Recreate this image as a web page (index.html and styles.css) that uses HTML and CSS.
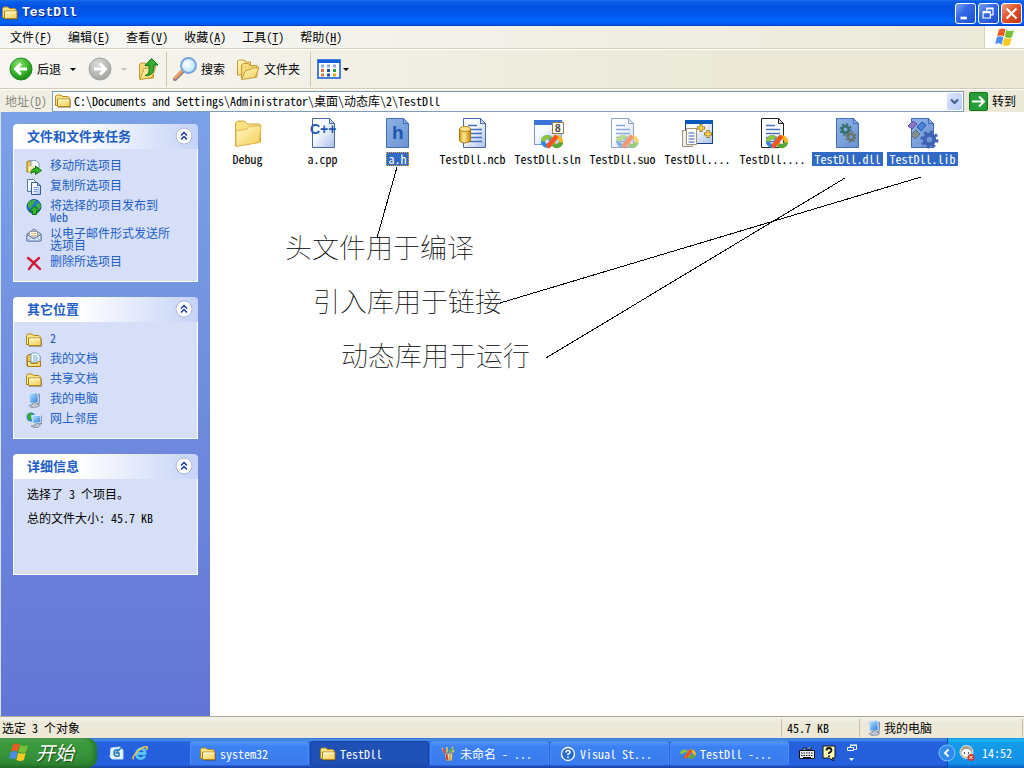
FILE: index.html
```html
<!DOCTYPE html>
<html lang="zh-CN">
<head>
<meta charset="utf-8">
<title>TestDll</title>
<link rel="stylesheet" href="styles.css">
</head>
<body>
<svg class="defs" aria-hidden="true">
  <defs>
    <linearGradient id="gFold" x1="0" y1="0" x2="1" y2="1"><stop offset="0" stop-color="#fffbc4"/><stop offset="1" stop-color="#f5cb55"/></linearGradient>
    <linearGradient id="gPage" x1="0" y1="0" x2="1" y2="1"><stop offset="0" stop-color="#fff"/><stop offset=".4" stop-color="#f6f9ff"/><stop offset="1" stop-color="#a9bfea"/></linearGradient>
    <linearGradient id="gSel" x1="0" y1="0" x2="1" y2="1"><stop offset="0" stop-color="#8fb3e6"/><stop offset="1" stop-color="#6a92d4"/></linearGradient>
    <linearGradient id="gCyl" x1="0" y1="0" x2="1" y2="0"><stop offset="0" stop-color="#d89c1c"/><stop offset=".4" stop-color="#ffe98e"/><stop offset="1" stop-color="#c98509"/></linearGradient>
    <radialGradient id="gGreen" cx=".4" cy=".3" r=".8"><stop offset="0" stop-color="#8ee36e"/><stop offset=".5" stop-color="#3cb82d"/><stop offset="1" stop-color="#0f7c10"/></radialGradient>
    <radialGradient id="gGray" cx=".4" cy=".3" r=".8"><stop offset="0" stop-color="#dcdcda"/><stop offset="1" stop-color="#9b9b99"/></radialGradient>
    <radialGradient id="gLens" cx=".4" cy=".4" r=".7"><stop offset="0" stop-color="#fff"/><stop offset="1" stop-color="#a5dcfb"/></radialGradient>
    <linearGradient id="gMon" x1="0" y1="0" x2="1" y2="1"><stop offset="0" stop-color="#c5edff"/><stop offset="1" stop-color="#1c78e0"/></linearGradient>
  </defs>
  <symbol id="folder" viewBox="0 0 16 16">
    <path d="M.5 12.500V3.500l1-1.500h4.500L7.500 3.500h5.500l1 1v8z" fill="#fbe388" stroke="#b5851c"/>
    <path d="M2.500 13.500v-7.500h12.500v7.500z" fill="url(#gFold)" stroke="#b5851c"/>
    <path d="M3.500 7h10.500" stroke="#fffbd8"/>
    <path d="M3 14.500h12.500V7" stroke="#554419" opacity=".4" fill="none"/>
  </symbol>
  <symbol id="docfolder" viewBox="0 0 16 16">
    <path d="M1 14V4l1.500-1.500H7L8 4h6v10z" fill="#f0c24d" stroke="#9b6d0b"/>
    <path d="M5 10V2l1-1h5l3 3v6H5z" fill="#fff" stroke="#6fa4d8"/><path d="M7 4h4M7 6h5M7 8h5" stroke="#61a4e0"/>
    <path d="M1.500 14.500v-5H4l1 2h6l1-2h2.500v5z" fill="url(#gFold)" stroke="#ad7b12"/>
  </symbol>
  <symbol id="move" viewBox="0 0 16 16">
    <path d="M1 13V3l1.500-1H6l1 1.500h5V13z" fill="#f3c757" stroke="#9b6d0b"/><path d="M5 7V1.500h5l3 3V9H5z" fill="#fff" stroke="#789ac4"/>
    <path d="M2.500 13.500v-6H10v6z" fill="url(#gFold)"/>
    <path d="M5 14.500c0-3 1-5 4.500-5V7l6 4.500-6 4v-2.700c-2 0-3 .4-4.500 1.700z" fill="#32b42b" stroke="#08750b"/>
  </symbol>
  <symbol id="copy" viewBox="0 0 16 16">
    <path d="M1.500 .5h6l3 3v9h-9z" fill="url(#gPage)" stroke="#5679a9"/>
    <path d="M5.500 3.500h6l3 3v9h-9z" fill="url(#gPage)" stroke="#385e96"/><path d="M11.500 3.500v3h3" fill="#a8c4ed" stroke="#385e96"/>
    <path d="M7.500 8.500h5M7.500 10.500h5M7.500 12.500h4" stroke="#79a1da"/>
  </symbol>
  <symbol id="publish" viewBox="0 0 16 16">
    <circle cx="8" cy="7.500" r="7" fill="#2577cf" stroke="#174f96"/><path d="M2 4c2-3 5-3 8-3L8 4 6 6 5 9 2 8zm8 1 4-1 1 4-3 3z" fill="#3eb33c"/>
    <path d="M8.500 7l5 5h-3v3.500h-4V12h-3z" fill="#32b42b" stroke="#077111"/>
  </symbol>
  <symbol id="mail" viewBox="0 0 16 16">
    <path d="M1 7l7-5 7 5v7H1z" fill="#b5cbee" stroke="#6179a7"/><path d="M3.500 4.500h8V10h-8z" fill="#fffef2" stroke="#9b9c9b"/><path d="M5 6.500h5M5 8.500h5" stroke="#e0b868"/>
    <path d="M1 7.500l7 4.500 7-4.500V14H1z" fill="#dfebff" stroke="#6179a7"/><path d="M1 14l5-4M15 14l-5-4" stroke="#869ec7"/>
  </symbol>
  <symbol id="delete" viewBox="0 0 16 16"><path d="M2 3c4 3 8 7 12 11M13 3C9 6 6 9 3 14" stroke="#d31635" stroke-width="2.400" fill="none" stroke-linecap="round"/></symbol>
  <symbol id="pc" viewBox="0 0 16 16">
    <path d="M10 1l4 1v9l-3 2z" fill="#8895ad"/><path d="M2.500 1.500l9-1 1 9.500-8.500 1.500z" fill="url(#gMon)" stroke="#dbe6f5"/>
    <path d="M6 11.500l4-1 1 1.500 3 1-2 2-7 .5L3 13.500l3-.5z" fill="#c1c8d4" stroke="#747e95" stroke-width=".7"/>
  </symbol>
  <symbol id="network" viewBox="0 0 16 16">
    <circle cx="5" cy="5" r="4.500" fill="#2681d5"/><path d="M1 4c1-4 5-3 6-3L5 4l1 3-3 2z" fill="#35ac35"/>
    <path d="M14 3l2 1v8l-3 1z" fill="#77859f"/><path d="M5.500 3.500h9l.5 7-8 1z" fill="url(#gMon)" stroke="#dbe6f5"/><path d="M9 12l4-.5 1 2-2 2H8l-3-1.500 4-.5z" fill="#c1c8d4" stroke="#747e95" stroke-width=".7"/>
  </symbol>
  <symbol id="flag" viewBox="0 0 20 20">
    <path d="M4 2.500q3-2 6.500 0L8.700 9.500q-3.200-2-6.700 0z" fill="#ee5a24"/><path d="M11.300 3q3.200 2 7.700 0L17 10q-3.500 2-7.500-.3z" fill="#76c035"/>
    <path d="M1.800 10.300q3.200-2 6.600 0L6.600 17.500Q4 15.500 .2 17z" fill="#4a8df0"/><path d="M9.200 10.800q4 2 7.600 0l-2 7.200q-4 2-7.500-.3z" fill="#fcca20"/>
  </symbol>
  <symbol id="vs" viewBox="0 0 24 16">
    <circle cx="7" cy="8" r="4.700" fill="none" stroke="#2f86dc" stroke-width="4.400"/>
    <path d="M2.300 8A4.700 4.700 0 0 1 10 4.500" fill="none" stroke="#8cc63e" stroke-width="4.400"/>
    <circle cx="17" cy="8" r="4.700" fill="none" stroke="#f6b81c" stroke-width="4.400"/>
    <path d="M21.700 9A4.700 4.700 0 0 1 13.500 11.200" fill="none" stroke="#57a83a" stroke-width="4.400"/>
    <path d="M7 14Q12 9 17 2" fill="none" stroke="#ee5520" stroke-width="5"/>
  </symbol>
  <symbol id="page" viewBox="0 0 32 32"><path d="M4.500 1.500h17l5 5v24h-22z" fill="url(#gPage)" stroke="#4a68a5"/><path d="M21.500 1.500v5h5z" fill="#c7d9f6" stroke="#4a68a5"/></symbol>
  <symbol id="pagesel" viewBox="0 0 32 32"><path d="M4.500 1.500h17l5 5v24h-22z" fill="url(#gSel)" stroke="#406cb8"/><path d="M21.500 1.500v5h5z" fill="#82a8e5" stroke="#406cb8"/></symbol>
  <symbol id="lines" viewBox="0 0 32 32"><path d="M9 8.500h9M9 12.500h14M9 16.500h14M9 20.500h14M9 24.500h14" stroke="#4472bd" stroke-width="1.500"/></symbol>
  <symbol id="gear" viewBox="0 0 20 20"><circle cx="10" cy="10" r="5" fill="none" stroke="currentColor" stroke-width="4"/><circle cx="10" cy="10" r="8" fill="none" stroke="currentColor" stroke-width="3" stroke-dasharray="3.140 3.140"/></symbol>
  <symbol id="chev" viewBox="0 0 18 18"><circle cx="9" cy="9" r="8" fill="#fff" stroke="#a9b7dc"/><path d="M6 8.500l3-3 3 3M6 12.500l3-3 3 3" fill="none" stroke="#123a96" stroke-width="1.500"/></symbol>
</svg>

<header class="titlebar">
  <svg class="i16"><use href="#folder"/></svg>
  <h1>TestDll</h1>
  <div class="winbtns">
    <button class="wb" aria-label="最小化"><svg viewBox="0 0 21 21"><path d="M5 14h7v3H5z" fill="#fff"/></svg></button>
    <button class="wb" aria-label="还原"><svg viewBox="0 0 21 21"><path d="M8.500 8V4.500h7V12H13M8 5.500h8M4.500 8.500h8v7h-8zM4 9.500h9" fill="none" stroke="#fff" stroke-width="1.300"/></svg></button>
    <button class="wb close" aria-label="关闭"><svg viewBox="0 0 21 21"><path d="M5 5l11 11M16 5L5 16" stroke="#fff" stroke-width="2.400"/></svg></button>
  </div>
</header>

<nav class="menubar">
  <button>文件(<u>F</u>)</button><button>编辑(<u>E</u>)</button><button>查看(<u>V</u>)</button><button>收藏(<u>A</u>)</button><button>工具(<u>T</u>)</button><button>帮助(<u>H</u>)</button>
  <span class="brand"><svg class="i20"><use href="#flag"/></svg></span>
</nav>

<div class="toolbar">
  <button class="tb"><svg class="i24" viewBox="0 0 24 24"><circle cx="12" cy="12" r="11" fill="url(#gGreen)" stroke="#25872a"/><path d="M18 12H7M12 6.500 6.500 12l5.500 5.500" fill="none" stroke="#fff" stroke-width="3"/></svg>后退</button>
  <button class="drop" aria-label="后退列表"></button>
  <button class="tb fwd" aria-label="前进" disabled><svg class="i24" viewBox="0 0 24 24"><circle cx="12" cy="12" r="11" fill="url(#gGray)" stroke="#a5a5a2"/><path d="M6 12h11M12 6.500l5.500 5.500-5.500 5.500" fill="none" stroke="#fff" stroke-width="3"/></svg></button>
  <button class="drop off" aria-label="前进列表" disabled></button>
  <button class="tb up" aria-label="向上"><svg class="i24" viewBox="0 0 24 24"><path d="M3.500 22V7l2-1h4l1 2h7v13z" fill="#f5d878" stroke="#c59a35"/><path d="M4 22.500l4-11 12-2-4 11z" fill="url(#gFold)" stroke="#c59a35"/><path d="M9 18.500c5-1 4-6 4-10H9l6.500-7L22 8h-4c0 7-2 11-9 10.500z" fill="#37ad35" stroke="#0d7416"/></svg></button>
  <span class="sep"></span>
  <button class="tb"><svg class="i24" viewBox="0 0 24 24"><path d="M2 22l8-8" stroke="#8c7b8d" stroke-width="4" stroke-linecap="round"/><path d="M2 21l7-7" stroke="#ef9e5c" stroke-width="2.500" stroke-linecap="round"/><circle cx="15.500" cy="8.500" r="7.500" fill="url(#gLens)" stroke="#7ba4dc" stroke-width="2"/></svg>搜索</button>
  <button class="tb folders"><svg class="i24" viewBox="0 0 24 24"><path d="M1.500 18V4l2-1h5l1 2h5v13z" fill="url(#gFold)" stroke="#c59a35"/><path d="M5.500 21V8l2-1.500h5l1.500 2h7V20z" fill="#f5d878" stroke="#c59a35"/><path d="M5.500 22.500l4-9 5-1 1-1.500 7.500-.5-4 10z" fill="url(#gFold)" stroke="#c59a35"/></svg>文件夹</button>
  <span class="sep"></span>
  <button class="tb" aria-label="查看"><svg class="i24" viewBox="0 0 24 24"><rect x="1" y="3" width="22" height="18" fill="#fff" stroke="#0b58d5" stroke-width="1.500"/><path d="M1 3h22v3H1z" fill="#1260df"/><path d="M4 9h3M10 9h3M16 9h3" stroke="#8faad6" stroke-width="3"/><path d="M4 13.500h3M4 18h3" stroke="#e96f42" stroke-width="3"/><path d="M10 13.500h3M10 18h3" stroke="#184ab0" stroke-width="3"/><path d="M16 13.500h3" stroke="#26a338" stroke-width="3"/><path d="M16 18h3" stroke="#d9ab25" stroke-width="3"/></svg></button>
  <button class="drop tight" aria-label="查看列表"></button>
</div>

<div class="addressbar">
  <label for="addr">地址(<u>D</u>)</label>
  <div class="combo"><svg class="i16"><use href="#folder"/></svg><input id="addr" type="text" value="C:\Documents and Settings\Administrator\桌面\动态库\2\TestDll"><button aria-label="展开"><svg viewBox="0 0 15 17"><path d="M4 6.500l3.500 3.500L11 6.500" fill="none" stroke="#42608f" stroke-width="2.200"/></svg></button></div>
  <button class="go"><svg viewBox="0 0 19 19"><rect x=".5" y=".5" width="18" height="18" rx="1" fill="#259c35" stroke="#157622"/><path d="M3 9.500h12M10 4.500l5 5-5 5" fill="none" stroke="#fff" stroke-width="2"/></svg>转到</button>
</div>

<main class="content">
  <aside class="side">
    <section class="box">
      <h2>文件和文件夹任务<button aria-label="折叠"><svg><use href="#chev"/></svg></button></h2>
      <ul>
        <li><svg class="i16"><use href="#move"/></svg><a href="#">移动所选项目</a></li>
        <li><svg class="i16"><use href="#copy"/></svg><a href="#">复制所选项目</a></li>
        <li><svg class="i16"><use href="#publish"/></svg><a href="#">将选择的项目发布到 Web</a></li>
        <li><svg class="i16"><use href="#mail"/></svg><a href="#">以电子邮件形式发送所选项目</a></li>
        <li><svg class="i16"><use href="#delete"/></svg><a href="#">删除所选项目</a></li>
      </ul>
    </section>
    <section class="box">
      <h2>其它位置<button aria-label="折叠"><svg><use href="#chev"/></svg></button></h2>
      <ul>
        <li><svg class="i16"><use href="#folder"/></svg><a href="#">2</a></li>
        <li><svg class="i16"><use href="#docfolder"/></svg><a href="#">我的文档</a></li>
        <li><svg class="i16"><use href="#folder"/></svg><a href="#">共享文档</a></li>
        <li><svg class="i16"><use href="#pc"/></svg><a href="#">我的电脑</a></li>
        <li><svg class="i16"><use href="#network"/></svg><a href="#">网上邻居</a></li>
      </ul>
    </section>
    <section class="box">
      <h2>详细信息<button aria-label="折叠"><svg><use href="#chev"/></svg></button></h2>
      <div class="details"><p>选择了 3 个项目。</p><p>总的文件大小: 45.7 KB</p></div>
    </section>
  </aside>

  <section class="pane">
    <ul class="files">
      <li><svg viewBox="0 0 32 32"><path d="M3.500 29V6l2-2h7l3 3h12l1 2v16z" fill="#fbe182" stroke="#cfa43a"/><path d="M4 29.500V14l11-2 2-2.500 12-1-1.500 17z" fill="url(#gFold)" stroke="#dfb44c"/></svg><span>Debug</span></li>
      <li><svg viewBox="0 0 32 32"><use href="#page" x="1"/><text x="3" y="17" class="ic cpp">C++</text></svg><span>a.cpp</span></li>
      <li class="sel focus"><svg viewBox="0 0 32 32"><use href="#pagesel"/><text x="10" y="22" class="ic h">h</text></svg><span>a.h</span></li>
      <li><svg viewBox="0 0 32 32"><use href="#page" x="2"/><use href="#lines" x="2"/><path d="M2.500 12v12q5 4 11 0V12z" fill="url(#gCyl)" stroke="#ac7810"/><ellipse cx="8" cy="12" rx="5.500" ry="2.500" fill="#ffe58b" stroke="#bb8717"/></svg><span>TestDll.ncb</span></li>
      <li><svg viewBox="0 0 32 32"><rect x="2.500" y="3.500" width="27" height="24" fill="url(#gPage)" stroke="#7b99d1"/><path d="M2 3h28v5H2z" fill="#3975d5"/><use href="#vs" x="8" y="17" width="24" height="15"/><rect x="20.500" y="5.500" width="11" height="11" fill="#fffdf0" stroke="#987c58"/><text x="23" y="15" class="ic n8">8</text></svg><span>TestDll.sln</span></li>
      <li><svg viewBox="0 0 32 32" class="faded"><use href="#page"/><use href="#lines"/><use href="#vs" x="9" y="17" width="23" height="15"/></svg><span>TestDll.suo</span></li>
      <li><svg viewBox="0 0 32 32"><rect x="3.500" y="3.500" width="27" height="23" fill="url(#gPage)" stroke="#173e84"/><path d="M3 3h28v4H3z" fill="#0759ba"/><path d="M.500 13.500h10v16H.5z" fill="#eee" stroke="#9d9477"/><path d="M4.500 11.500h10v16h-10z" fill="#fff" stroke="#9d9477"/><path d="M6.500 16h6M6.500 19h6M6.500 22h6M6.500 25h6" stroke="#315da5"/><path d="M19 7v8M15 11h8M26 13v8M22 17h8" stroke="#a2761c" stroke-width="3"/><path d="M19 8v6M16 11h6M26 14v6M23 17h6" stroke="#ffe04e" stroke-width="1.500"/></svg><span>TestDll....</span></li>
      <li><svg viewBox="0 0 32 32"><path d="M4.500 1.500h17l5 5v24h-22z" fill="#fff" stroke="#222"/><path d="M21.500 1.500v5h5z" fill="#ccd6e8" stroke="#222"/><use href="#lines"/><use href="#vs" x="8" y="17" width="24" height="15"/></svg><span>TestDll....</span></li>
      <li class="sel"><svg viewBox="0 0 32 32"><use href="#pagesel"/><use href="#gear" x="7" y="6" width="13" height="13" class="g1"/><use href="#gear" x="13" y="14" width="12" height="12" class="g2"/></svg><span>TestDll.dll</span></li>
      <li class="sel"><svg viewBox="0 0 32 32"><use href="#pagesel"/><path d="M1 9l5-5 4 3-5 5z" fill="#8d73c7" stroke="#5b52a1"/><path d="M10 10l5-5 4 3-5 6z" fill="#4c84da" stroke="#2455a3"/><path d="M4 18l5-5 4 4-5 5z" fill="#848d87" stroke="#586b87"/><use href="#gear" x="13" y="13" width="19" height="19" class="g3"/></svg><span>TestDll.lib</span></li>
    </ul>
    <div class="notes">
      <svg viewBox="0 0 814 260" width="814" height="260"><path d="M187 55 167 126M711 65 290 191M635 66 336 246" stroke="#000" fill="none" shape-rendering="crispEdges"/></svg>
      <p class="n-head">头文件用于编译</p><p class="n-lib">引入库用于链接</p><p class="n-dll">动态库用于运行</p>
    </div>
  </section>
</main>

<footer class="status">
  <span class="grow">选定 3 个对象</span><span class="size">45.7 KB</span><span class="loc"><svg class="i16"><use href="#pc"/></svg>我的电脑</span>
</footer>

<div class="taskbar">
  <button class="start"><svg class="i20"><use href="#flag"/></svg>开始</button>
  <div class="quick">
    <button aria-label="显示桌面"><svg class="i16" viewBox="0 0 16 16"><path d="M2 3l9-1 3 3v9H3l-2-2z" fill="#e9f4ff" stroke="#bfe0fa"/><path d="M10 5q-5-1-5 3t5 3v-3H7l6-6" fill="none" stroke="#1f78b7" stroke-width="1.500"/></svg></button>
    <button aria-label="Internet Explorer"><svg class="i16" viewBox="0 0 16 16"><path d="M13 11q-2 3-5 2.500-4-1-3.500-5T9 4t4 4.500H6" fill="none" stroke="#58c2fa" stroke-width="2.800"/><path d="M2 14q-3-1 3-7t10-5q1 1-1 3" fill="none" stroke="#f0c548" stroke-width="1.500"/></svg></button>
  </div>
  <div class="tasks">
    <button><svg class="i16"><use href="#folder"/></svg>system32</button>
    <button class="active"><svg class="i16"><use href="#folder"/></svg>TestDll</button>
    <button><svg class="i16" viewBox="0 0 16 16"><path d="M5 8 2 2M7 8V1M9 8l4-7M11 9l3-5" stroke="#ebc64b" stroke-width="1.600"/><path d="M5 7 3 3" stroke="#e44a28" stroke-width="2"/><path d="M10 6l2-4" stroke="#51b540" stroke-width="2"/><path d="M4 7h9l-1 8H6z" fill="#cfdce8" stroke="#5c718a"/><path d="M6.500 8l1 6" stroke="#d73e29" stroke-width="2"/><path d="M10 8v6" stroke="#e0a92f" stroke-width="2"/></svg>未命名 - ...</button>
    <button><svg class="i16" viewBox="0 0 16 16"><circle cx="8" cy="8" r="6.500" fill="#2769ce" stroke="#fff" stroke-width="1.300"/><path d="M6 6.500q0-2 2-2t2 1.700Q10 7.500 8 8.300v1M8 10.500v1.500" fill="none" stroke="#fff" stroke-width="1.500"/></svg>Visual St...</button>
    <button><svg class="i16"><use href="#vs"/></svg>TestDll -...</button>
  </div>
  <div class="lang">
    <button aria-label="键盘"><svg class="i16" viewBox="0 0 16 16"><path d="M4 5V3h3v1h5V2M.5 5.500h15v8H.5z" fill="#eee" stroke="#111"/><path d="M2 8h12M2 10.500h12" stroke="#111" stroke-dasharray="1.500 1"/><path d="M4 12.500h8" stroke="#111"/></svg></button>
    <button aria-label="帮助"><svg class="i16" viewBox="0 0 16 16"><path d="M2 1h12v12h-3l2 3-5-3H2z" fill="#ffffb5" stroke="#111"/><path d="M5.500 5.500Q5.500 3 8 3t2.500 2.500Q10 7 8 8v1M8 10.500v1.500" fill="none" stroke="#111" stroke-width="1.800"/></svg></button>
    <button aria-label="选项"><svg class="opt" viewBox="0 0 10 20"><path d="M3.500 4V2.500h6v4H7M3 2h7M.5 4.500h6v3h-6z" fill="none" stroke="#fff"/><path d="M2 15h5l-2.500 3z" fill="#fff"/></svg></button>
  </div>
  <div class="tray">
    <button class="hide" aria-label="显示图标"><svg viewBox="0 0 18 18"><circle cx="9" cy="9" r="8" fill="#2f8bed" stroke="#7fc2fb"/><path d="M10.500 5.500 7 9l3.500 3.500" fill="none" stroke="#fff" stroke-width="2"/></svg></button>
    <svg class="i16" viewBox="0 0 16 16"><circle cx="7.500" cy="7" r="6.500" fill="#a7a391" stroke="#eae8d9"/><ellipse cx="7.500" cy="8" rx="5" ry="4" fill="#fff"/><path d="M5.500 7v2M9.500 7v2" stroke="#555"/><circle cx="12" cy="12.500" r="3.500" fill="#cd3834"/><path d="M10.500 11l3 3m0-3-3 3" stroke="#fff"/></svg>
    <time>14:52</time>
  </div>
</div>
</body>
</html>
```
FILE: styles.css
```css
* { box-sizing: border-box; }
body {
  margin: 0;
  height: 100vh;
  display: flex;
  flex-direction: column;
  overflow: hidden;
  background: #ece9d8;
  color: #000;
  font: 12px/16px "Noto Sans CJK SC", sans-serif;
  font-feature-settings: "hwid" 1;
}
button, input {
  font: inherit;
  font-feature-settings: inherit;
  color: inherit;
  margin: 0;
  padding: 0;
  border: 0;
  background: none;
}
button { display: flex; align-items: center; flex: none; white-space: nowrap; }
ul { list-style: none; margin: 0; padding: 0; }
h1, h2, p { margin: 0; }
svg { display: block; flex: none; }
.defs { position: absolute; width: 0; height: 0; }
.i16 { width: 16px; height: 16px; }
.i20 { width: 20px; height: 20px; }
.i24 { width: 24px; height: 24px; }

.titlebar {
  flex: none;
  height: 26px;
  display: flex;
  align-items: center;
  padding: 0 2px;
  gap: 4px;
  background: linear-gradient(#1b6fe8, #0a5ce8 8%, #0053e1 25%, #0055ea 50%, #0066ff 80%, #005bf3 92%, #0040c0);
}
.titlebar h1 { font: bold 13px/18px "Liberation Mono", monospace; color: #fff; text-shadow: 1px 1px #0a1f7c; }
.winbtns { margin-left: auto; display: flex; gap: 2px; }
.wb { width: 21px; height: 21px; border: 1px solid #fff; border-radius: 3px; background: linear-gradient(135deg, #7ba4f6, #3568e4 40%, #1c50d0); }
.wb svg { width: 19px; height: 19px; }
.wb.close { background: linear-gradient(135deg, #f0a286, #e0532b 45%, #c43410); }

.menubar {
  flex: none;
  height: 23px;
  display: flex;
  align-items: center;
  gap: 16px;
  padding-left: 10px;
  background: linear-gradient(90deg, #f7f7f6, #ece9d8);
  border-bottom: 1px solid #d8d2bd;
}
u { text-underline-offset: 2px; }
.brand { margin-left: auto; width: 40px; align-self: stretch; background: #fff; border-left: 1px solid #d8d2bd; display: flex; align-items: center; justify-content: center; }

.toolbar {
  flex: none;
  height: 40px;
  display: flex;
  align-items: center;
  padding: 0 9px;
  border-top: 1px solid #fff;
  border-bottom: 1px solid #d2ccb6;
  background: linear-gradient(90deg, #f7f6f2, #ece9d8 70%);
}
.tb { gap: 4px; }
.fwd { margin-left: 3px; }
.drop { width: 24px; justify-content: center; }
.drop::after { content: ""; border: 3px solid transparent; border-top-color: #000; border-bottom: 0; }
.drop.off::after { border-top-color: #c5c2b5; }
.drop.tight { width: 10px; }
.up svg { margin-right: 6px; }
.sep { width: 1px; align-self: stretch; margin: 2px 6px 1px 0; background: #cfc9ac; }
.folders { margin: 0 10px 0 11px; }

.addressbar {
  flex: none;
  height: 23px;
  display: flex;
  align-items: center;
  gap: 5px;
  padding: 0 8px 0 5px;
  border-top: 1px solid #fff;
  background: linear-gradient(90deg, #f1efe5, #ece9d8);
}
.addressbar label { color: #8a887c; }
.combo { flex: 1; min-width: 0; height: 21px; display: flex; align-items: center; border: 1px solid #7f9db9; background: #fff; padding: 0 1px 0 2px; }
.combo input { flex: 1; min-width: 0; outline: 0; padding-left: 3px; }
.combo button { width: 15px; height: 17px; border-radius: 2px; background: linear-gradient(135deg, #dfe8ff, #b4c8f6); }
.combo button svg { width: 15px; height: 17px; }
.go { gap: 4px; }
.go svg { width: 19px; height: 19px; }

.content { flex: 1; min-height: 0; display: flex; background: #fff; }
.side {
  flex: none;
  width: 210px;
  padding: 12px 12px 0;
  display: flex;
  flex-direction: column;
  gap: 15px;
  border-left: 1px solid #d8e2f5;
  background: linear-gradient(#7ba2e7, #6375d6);
}
.box { border-radius: 4px 4px 0 0; }
.box h2 {
  height: 25px;
  display: flex;
  align-items: center;
  justify-content: space-between;
  padding: 0 5px 2px 14px;
  border-radius: 4px 4px 0 0;
  background: linear-gradient(90deg, #fff 35%, #c6d3f7);
  color: #215dc6;
  font-size: 13px;
  line-height: 16px;
}
.box h2 svg { width: 18px; height: 18px; }
.box ul, .details { border: 1px solid #fff; border-top: 0; background: #d6dff7; }
.box ul { display: flex; flex-direction: column; gap: 4px; padding: 10px 24px 10px 12px; }
.box li { display: flex; align-items: flex-start; gap: 8px; min-height: 16px; line-height: 12px; }
.box a { color: #215dc6; text-decoration: none; }
.details { display: flex; flex-direction: column; gap: 8px; padding: 7px 13px 48px; }

.pane { flex: 1; min-width: 0; position: relative; }
.files { display: flex; flex-wrap: wrap; padding-top: 5px; }
.files li { width: 75px; display: flex; flex-direction: column; align-items: center; gap: 3px; }
.files li > svg { width: 32px; height: 32px; }
.files span { padding: 0 2px; line-height: 14px; white-space: nowrap; }
.files .sel span { background: #316ac5; color: #fff; }
.files .focus span { outline: 1px dotted #e0a03a; outline-offset: -1px; }
.ic { font-family: "Liberation Sans", sans-serif; font-weight: bold; fill: #1c58b0; font-feature-settings: normal; }
.cpp { font-size: 14px; }
.h { font-size: 19px; }
.n8 { font-size: 10px; fill: #444; }
.faded { opacity: .6; }
.g1 { color: #37706f; }
.g2 { color: #6b7368; }
.g3 { color: #3f62b3; }
.notes { position: absolute; inset: 0; pointer-events: none; }
.notes p { position: absolute; font-size: 27px; line-height: 32px; font-weight: 100; white-space: nowrap; }
.n-head { left: 75px; top: 119px; }
.n-lib { left: 103px; top: 173px; }
.n-dll { left: 131px; top: 227px; }

.status {
  flex: none;
  height: 22px;
  display: flex;
  align-items: center;
  padding-right: 1px;
  border-top: 1px solid #aca899;
  background: linear-gradient(#f5f3ea, #ece9d8 30%);
}
.status span { height: 18px; display: flex; align-items: center; border-right: 1px solid #c5c1ae; padding-left: 2px; }
.status .grow { flex: 1; }
.status .size { width: 78px; padding-left: 5px; }
.status .loc { width: 163px; padding-left: 6px; gap: 2px; }

.taskbar {
  flex: none;
  height: 30px;
  display: flex;
  align-items: stretch;
  color: #fff;
  background: linear-gradient(#3168d5, #4993e6 6%, #2663e0 14%, #245edb 50%, #2562df 88%, #1941a5);
}
.start {
  width: 97px;
  padding: 0 0 2px 9px;
  gap: 7px;
  border-radius: 0 10px 10px 0;
  font-size: 19px;
  font-style: italic;
  text-shadow: 1px 1px 1px #174a17;
  background: linear-gradient(#64b060, #3c9a3c 15%, #37923a 60%, #2f8431 88%, #1f6322);
  box-shadow: inset -3px 0 4px #23752a;
}
.quick { display: flex; gap: 7px; width: 93px; padding-left: 12px; }
.tasks { display: flex; flex: 0 1 600px; min-width: 0; padding: 3px 0 2px; }
.tasks button {
  flex: 1 1 0;
  min-width: 0;
  margin-right: 1px;
  padding-left: 9px;
  gap: 4px;
  border: 1px solid #4b8cf3;
  border-bottom-color: #2b62cf;
  border-radius: 3px;
  background: linear-gradient(#5596fa, #3c81f3 20%, #3a7bf0);
}
.tasks .active { background: #1e50b5; border-color: #1a44a0; }
.lang { display: flex; gap: 6px; padding-left: 9px; }
.lang button:last-child { padding-left: 4px; }
.opt { width: 10px; height: 20px; }
.tray {
  margin-left: auto;
  width: 77px;
  display: flex;
  align-items: center;
  gap: 3px;
  border-left: 1px solid #1042af;
  background: linear-gradient(#1b8ce2, #18b9f4 6%, #139ce9 16%, #1290e8 85%, #0a5bc0);
}
.hide { margin-left: -10px; }
.hide svg { width: 18px; height: 18px; }
.tray time { padding-left: 4px; }
```
